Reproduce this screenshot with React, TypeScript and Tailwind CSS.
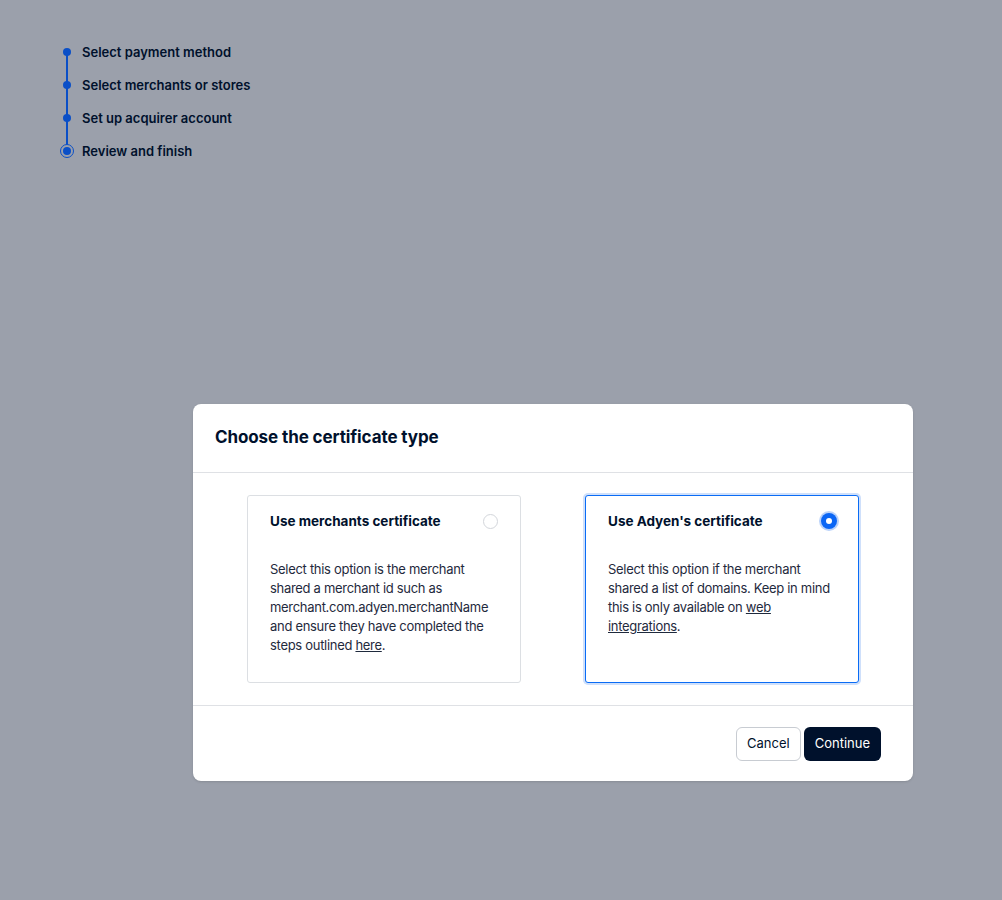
import React, { useState } from 'react';

const steps = [
  'Select payment method',
  'Select merchants or stores',
  'Set up acquirer account',
  'Review and finish',
];

type Option = {
  id: string;
  title: string;
  body: React.ReactNode;
};

const options: Option[] = [
  {
    id: 'merchant',
    title: 'Use merchants certificate',
    body: (
      <>
        Select this option is the merchant shared a merchant id such as merchant.com.adyen.merchantName and
        ensure they have completed the steps outlined <a className="underline">here</a>.
      </>
    ),
  },
  {
    id: 'adyen',
    title: "Use Adyen's certificate",
    body: (
      <>
        Select this option if the merchant shared a list of domains. Keep in mind this is only available on{' '}
        <a className="underline">web integrations</a>.
      </>
    ),
  },
];

export default function App() {
  const [selected, setSelected] = useState('adyen');

  return (
    <div className="min-h-[900px] bg-[#9ba0ab] text-[#00112c]" style={{ fontFamily: 'Inter, "Noto Sans", sans-serif' }}>
      {/* Stepper */}
      <div className="pl-[59px] pt-[42px]">
        <ul className="flex flex-col">
          {steps.map((s, i) => {
            const last = i === steps.length - 1;
            return (
              <li key={s} className="flex items-start h-[33px]">
                <div className="relative w-[15px] flex justify-center h-full">
                  {i < steps.length - 1 && (
                    <span className="absolute left-[7px] top-[9px] w-[1.5px] h-[33px] bg-[#0a4fc7]"></span>
                  )}
                  {last ? (
                    <span className="relative mt-[3px] w-[14px] h-[14px] rounded-full border-[1.5px] border-[#0a4fc7] flex items-center justify-center bg-[#9ba0ab]">
                      <span className="w-[8px] h-[8px] rounded-full bg-[#0a4fc7]"></span>
                    </span>
                  ) : (
                    <span className="relative mt-[6px] w-[8px] h-[8px] rounded-full bg-[#0a4fc7]"></span>
                  )}
                </div>
                <span className="ml-[8px] text-[13px] leading-[20px] font-semibold">{s}</span>
              </li>
            );
          })}
        </ul>
      </div>

      {/* Modal */}
      <div className="pl-[193px] pt-[230px]">
        <div className="w-[720px] bg-white rounded-[8px] shadow-sm">
          <div className="h-[69px] flex items-center px-[22px] border-b border-[#dfe1e5]">
            <h2 className="text-[17px] font-bold tracking-[-0.1px]">Choose the certificate type</h2>
          </div>

          <div className="flex justify-center gap-[64px] py-[22px] border-b border-[#dfe1e5]">
            {options.map((o) => {
              const active = selected === o.id;
              return (
                <div
                  key={o.id}
                  onClick={() => setSelected(o.id)}
                  className={`w-[274px] h-[188px] cursor-pointer rounded-[3px] bg-white pt-[15px] pl-[22px] pr-[21px] ${
                    active ? 'border border-[#0a6cf5] ring-2 ring-[#cfe0fb]' : 'border border-[#dcdfe3]'
                  }`}
                >
                  <div className="flex items-center justify-between">
                    <span className="text-[13.5px] leading-[20px] font-bold">{o.title}</span>
                    {active ? (
                      <span className="w-[16px] h-[16px] rounded-full bg-[#0a66f5] ring-2 ring-[#b9d2fa] flex items-center justify-center">
                        <span className="w-[6px] h-[6px] rounded-full bg-white"></span>
                      </span>
                    ) : (
                      <span className="mr-[1px] w-[15px] h-[15px] rounded-full border border-[#d3d6db] bg-white"></span>
                    )}
                  </div>
                  <p className="mt-[29px] pr-[2px] text-[13px] leading-[19px] tracking-[-0.3px] text-[#1f2a3d]">{o.body}</p>
                </div>
              );
            })}
          </div>

          <div className="flex justify-end gap-[3px] pt-[21px] pb-[20px] pr-[32px]">
            <button className="h-[34px] px-[10px] rounded-[6px] border border-[#c8ccd2] bg-white text-[13px] font-normal">
              Cancel
            </button>
            <button className="h-[34px] px-[11px] rounded-[6px] bg-[#00112c] text-white text-[13px] font-normal">
              Continue
            </button>
          </div>
        </div>
      </div>
    </div>
  );
}
